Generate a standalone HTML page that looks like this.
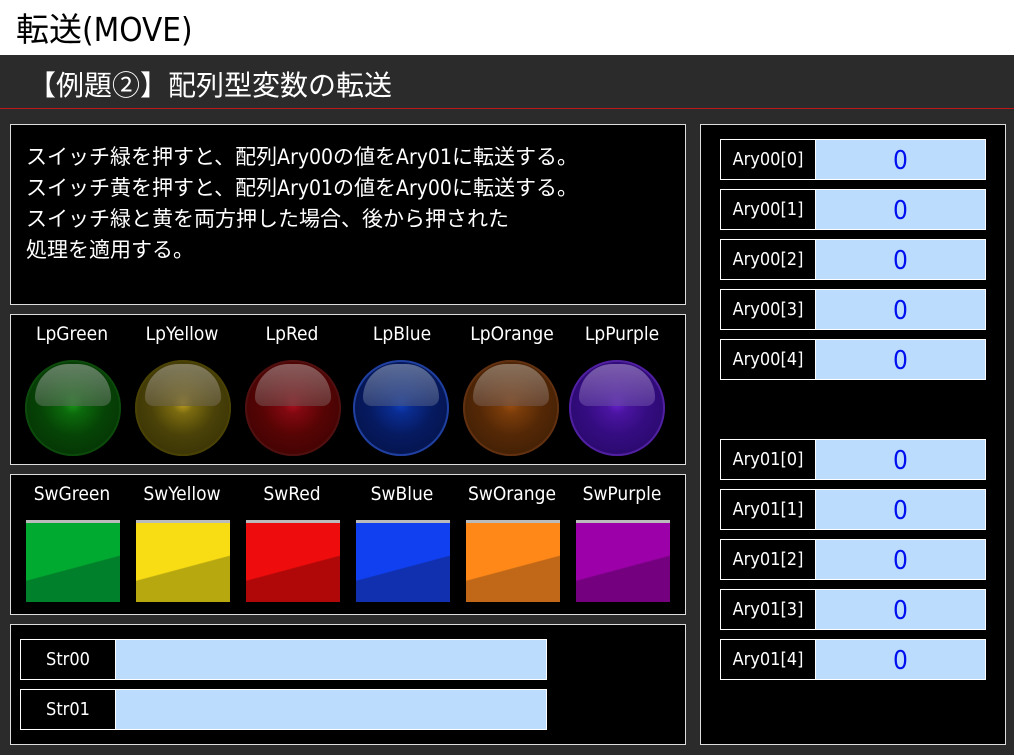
<!DOCTYPE html><html><head><meta charset="utf-8"><style>
*{margin:0;padding:0;box-sizing:border-box}
body{width:1014px;height:755px;background:#2b2b2b;position:relative;overflow:hidden;font-family:"DejaVu Sans Mono","Liberation Mono","Noto Sans CJK JP",monospace;color:#fff}
.a{position:absolute}
.p{position:absolute;background:#000;border:1px solid #ddd}
.lab{position:absolute;text-align:center;font-size:19px;width:110px;font-family:"DejaVu Sans Condensed","DejaVu Sans",sans-serif}
.lamp{position:absolute;width:96px;height:96px;border-radius:50%}
.sw{position:absolute;width:94px;height:82px;border-top:3px solid #bbb;overflow:hidden}
.row{position:absolute;height:41px;border:1px solid #fff;background:#bbdcfd}
.row .n{position:absolute;left:0;top:0;width:95px;height:39px;background:#000;border-right:1px solid #fff;text-align:center;line-height:39px;font-size:18px;font-family:"DejaVu Sans Condensed","DejaVu Sans",sans-serif}
.row .v{position:absolute;left:95px;right:0;top:0;text-align:center;line-height:42px;font-size:26px;color:#0010ee;font-family:"DejaVu Sans Condensed","DejaVu Sans",sans-serif}
</style></head><body>
<div class="a" style="left:0;top:0;width:1014px;height:55px;background:#fff"></div>
<div class="a" style="left:16px;top:3px;font-size:33px;color:#000;font-family:'DejaVu Sans Condensed','Noto Sans CJK JP',sans-serif">転送(MOVE)</div>
<div class="a" style="left:28px;top:64px;font-size:28px;color:#fff;font-family:'Noto Sans CJK JP',sans-serif;line-height:40px">【例題②】配列型変数の転送</div>
<div class="a" style="left:0;top:108px;width:1014px;height:1px;background:#c01818"></div>

<div class="p" style="left:10px;top:124px;width:676px;height:181px"></div>
<div class="a" style="left:26px;top:142px;font-size:21px;line-height:31px;font-family:'DejaVu Sans Condensed','Noto Sans CJK JP',sans-serif">スイッチ緑を押すと、配列Ary00の値をAry01に転送する。<br>スイッチ黄を押すと、配列Ary01の値をAry00に転送する。<br>スイッチ緑と黄を両方押した場合、後から押された<br>処理を適用する。</div>

<div class="p" style="left:10px;top:314px;width:676px;height:151px"></div>
<div class="p" style="left:10px;top:474px;width:676px;height:141px"></div>
<div class="p" style="left:10px;top:624px;width:676px;height:121px"></div>
<div class="p" style="left:700px;top:124px;width:306px;height:621px"></div>

<div class="lab" style="left:17px;top:323px">LpGreen</div>
<div class="lab" style="left:127px;top:323px">LpYellow</div>
<div class="lab" style="left:237px;top:323px">LpRed</div>
<div class="lab" style="left:347px;top:323px">LpBlue</div>
<div class="lab" style="left:457px;top:323px">LpOrange</div>
<div class="lab" style="left:567px;top:323px">LpPurple</div>

<div class="lamp" style="left:25px;top:360px;background:radial-gradient(circle at 50% 45%,#1a9a1a 0,#0c6a0c 15%,#064406 45%,#042a04 100%);box-shadow:inset 0 0 0 2px #0c4a0c"><div style="position:absolute;left:10px;top:4px;width:76px;height:42px;border-radius:40px 40px 10px 10px;background:linear-gradient(#8a9a8a,#4a6a4a);opacity:.7"></div></div>
<div class="lamp" style="left:135px;top:360px;background:radial-gradient(circle at 50% 45%,#c0a020 0,#7a6a10 15%,#4a4208 45%,#302a04 100%);box-shadow:inset 0 0 0 2px #4a4204"><div style="position:absolute;left:10px;top:4px;width:76px;height:42px;border-radius:40px 40px 10px 10px;background:linear-gradient(#9a9480,#6a6040);opacity:.7"></div></div>
<div class="lamp" style="left:245px;top:360px;background:radial-gradient(circle at 50% 45%,#b01020 0,#800810 15%,#560404 45%,#360202 100%);box-shadow:inset 0 0 0 2px #501010"><div style="position:absolute;left:10px;top:4px;width:76px;height:42px;border-radius:40px 40px 10px 10px;background:linear-gradient(#a08080,#704040);opacity:.7"></div></div>
<div class="lamp" style="left:353px;top:360px;background:radial-gradient(circle at 50% 45%,#1040c0 0,#0a2c90 15%,#061a60 45%,#041040 100%);box-shadow:inset 0 0 0 2px #2040a0"><div style="position:absolute;left:10px;top:4px;width:76px;height:42px;border-radius:40px 40px 10px 10px;background:linear-gradient(#8090b0,#405080);opacity:.7"></div></div>
<div class="lamp" style="left:463px;top:360px;background:radial-gradient(circle at 50% 45%,#a05010 0,#7a3c0a 15%,#542806 45%,#361a04 100%);box-shadow:inset 0 0 0 2px #603010"><div style="position:absolute;left:10px;top:4px;width:76px;height:42px;border-radius:40px 40px 10px 10px;background:linear-gradient(#a09080,#705040);opacity:.7"></div></div>
<div class="lamp" style="left:569px;top:360px;background:radial-gradient(circle at 50% 45%,#6a20d0 0,#4a14a0 15%,#340c80 45%,#220860 100%);box-shadow:inset 0 0 0 2px #5020a0"><div style="position:absolute;left:10px;top:4px;width:76px;height:42px;border-radius:40px 40px 10px 10px;background:linear-gradient(#9a80c0,#6040a0);opacity:.7"></div></div>

<div class="lab" style="left:17px;top:483px">SwGreen</div>
<div class="lab" style="left:127px;top:483px">SwYellow</div>
<div class="lab" style="left:237px;top:483px">SwRed</div>
<div class="lab" style="left:347px;top:483px">SwBlue</div>
<div class="lab" style="left:457px;top:483px">SwOrange</div>
<div class="lab" style="left:567px;top:483px">SwPurple</div>

<div class="sw" style="left:26px;top:520px;background:linear-gradient(165deg,#00aa30 55%,#00802a 56%)"></div>
<div class="sw" style="left:136px;top:520px;background:linear-gradient(165deg,#f8dc14 55%,#b8a810 56%)"></div>
<div class="sw" style="left:246px;top:520px;background:linear-gradient(165deg,#ee0c0c 55%,#b00808 56%)"></div>
<div class="sw" style="left:356px;top:520px;background:linear-gradient(165deg,#1040f0 55%,#1030b0 56%)"></div>
<div class="sw" style="left:466px;top:520px;background:linear-gradient(165deg,#ff8818 55%,#c06818 56%)"></div>
<div class="sw" style="left:576px;top:520px;background:linear-gradient(165deg,#9c00a8 55%,#740080 56%)"></div>

<div class="row" style="left:20px;top:639px;width:527px"><div class="n">Str00</div></div>
<div class="row" style="left:20px;top:689px;width:527px"><div class="n">Str01</div></div>

<div class="row" style="left:720px;top:139px;width:266px"><div class="n">Ary00[0]</div><div class="v">0</div></div>
<div class="row" style="left:720px;top:189px;width:266px"><div class="n">Ary00[1]</div><div class="v">0</div></div>
<div class="row" style="left:720px;top:239px;width:266px"><div class="n">Ary00[2]</div><div class="v">0</div></div>
<div class="row" style="left:720px;top:289px;width:266px"><div class="n">Ary00[3]</div><div class="v">0</div></div>
<div class="row" style="left:720px;top:339px;width:266px"><div class="n">Ary00[4]</div><div class="v">0</div></div>
<div class="row" style="left:720px;top:439px;width:266px"><div class="n">Ary01[0]</div><div class="v">0</div></div>
<div class="row" style="left:720px;top:489px;width:266px"><div class="n">Ary01[1]</div><div class="v">0</div></div>
<div class="row" style="left:720px;top:539px;width:266px"><div class="n">Ary01[2]</div><div class="v">0</div></div>
<div class="row" style="left:720px;top:589px;width:266px"><div class="n">Ary01[3]</div><div class="v">0</div></div>
<div class="row" style="left:720px;top:639px;width:266px"><div class="n">Ary01[4]</div><div class="v">0</div></div>
</body></html>
